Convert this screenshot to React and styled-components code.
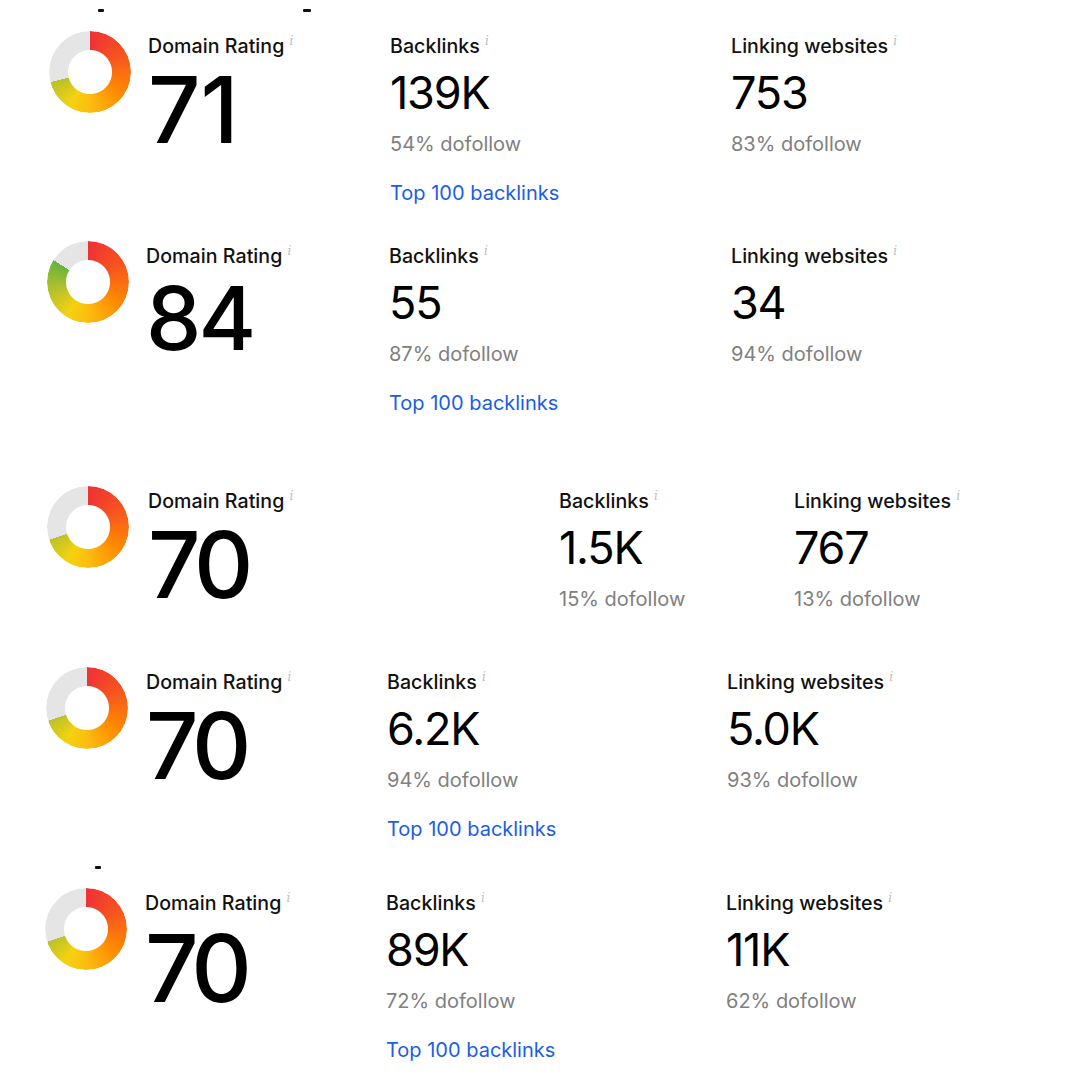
import React from "react";
import styled, { createGlobalStyle, css } from "styled-components";

const GlobalStyle = createGlobalStyle`
  html, body {
    margin: 0;
    padding: 0;
    background: #fff;
  }
  body {
    font-family: Inter, "Noto Sans", "Liberation Sans", sans-serif;
    color: #0a0a0a;
    -webkit-font-smoothing: antialiased;
  }
`;

const Page = styled.main`
  width: 1080px;
  min-height: 1080px;
  padding-top: 9px;
  box-sizing: border-box;
  display: flex;
  flex-direction: column;
`;

// bits of cut-off text left over at the edges of the crops
const TraceRow = styled.div`
  height: ${(p) => p.$height}px;
  margin-bottom: ${(p) => p.$after}px;
  display: flex;
`;

const Trace = styled.span`
  display: block;
  margin-left: ${(p) => p.$x}px;
  width: ${(p) => p.$w}px;
  height: 3px;
  background: #111;
  border-radius: 1px;
`;

const Block = styled.section`
  height: ${(p) => p.$height}px;
  padding-left: ${(p) => p.$left}px;
  display: grid;
  grid-template-columns: ${(p) => p.$cols};
  align-items: start;
  box-sizing: border-box;
`;

const GAUGE_COLORS = `
  #ef3137 0deg,
  #f6541f 60deg,
  #ff8a00 125deg,
  #fbbd10 180deg,
  #f4d20f 212deg,
  #bcc22a 252deg,
  #6cb43c 300deg,
  #3aa94a 360deg
`;

const Donut = styled.div`
  width: 82px;
  height: 82px;
  border-radius: 50%;
  ${(p) => css`
    background: conic-gradient(
        transparent 0deg ${p.$value * 3.6}deg,
        #e5e5e5 ${p.$value * 3.6}deg 360deg
      ),
      conic-gradient(${GAUGE_COLORS});
  `}
  -webkit-mask: radial-gradient(circle, transparent 21.5px, #000 22.5px);
  mask: radial-gradient(circle, transparent 21.5px, #000 22.5px);
`;

const Metric = styled.div`
  padding-top: 3px;
  display: flex;
  flex-direction: column;
`;

const Label = styled.div`
  font-size: 19.6px;
  line-height: 24px;
  font-weight: 500;
  letter-spacing: 0.05px;
  white-space: nowrap;
  color: #111;
`;

const Info = styled.sup`
  font-family: "DejaVu Serif", serif;
  font-style: italic;
  font-size: 12px;
  line-height: 0;
  color: #bdbdbd;
  margin-left: 5px;
  vertical-align: 8px;
`;

const Rating = styled.div`
  font-size: ${(p) => p.$size}px;
  line-height: 1;
  font-weight: 500;
  letter-spacing: ${(p) => p.$track}px;
  margin-top: 6px;
  color: #000;
`;

const Value = styled.div`
  font-size: 45px;
  line-height: 48px;
  font-weight: 400;
  letter-spacing: -1.2px;
  margin-top: 11px;
  color: #000;
`;

const Sub = styled.div`
  font-size: 20px;
  line-height: 24px;
  color: #808080;
  margin-top: 15px;
`;

const TopLink = styled.a`
  font-size: 20px;
  line-height: 24px;
  color: #1b5de6;
  text-decoration: none;
  margin-top: 25px;
  cursor: pointer;
`;

const rows = [
  {
    height: 210,
    left: 49,
    cols: "99px 242px 341px 1fr",
    dr: 71,
    drSize: 92,
    track: 0,
    backlinks: "139K",
    blFollow: "54%",
    sites: "753",
    siteFollow: "83%",
    top: true,
  },
  {
    height: 245,
    left: 47,
    cols: "99px 243px 342px 1fr",
    dr: 84,
    drSize: 88,
    track: -3,
    backlinks: "55",
    blFollow: "87%",
    sites: "34",
    siteFollow: "94%",
    top: true,
  },
  {
    height: 181,
    left: 47,
    cols: "101px 411px 235px 1fr",
    dr: 70,
    drSize: 92,
    track: -5,
    backlinks: "1.5K",
    blFollow: "15%",
    sites: "767",
    siteFollow: "13%",
    top: false,
  },
  {
    height: 199,
    left: 46,
    cols: "100px 241px 340px 1fr",
    dr: 70,
    drSize: 92,
    track: -5,
    backlinks: "6.2K",
    blFollow: "94%",
    sites: "5.0K",
    siteFollow: "93%",
    top: true,
  },
  {
    height: 190,
    left: 45,
    cols: "100px 241px 340px 1fr",
    dr: 70,
    drSize: 94,
    track: -6,
    backlinks: "89K",
    blFollow: "72%",
    sites: "11K",
    siteFollow: "62%",
    top: true,
  },
];

const OverviewRow = ({ row }) => (
  <Block $height={row.height} $left={row.left} $cols={row.cols}>
    <Donut $value={row.dr} />
    <Metric>
      <Label>
        Domain Rating<Info>i</Info>
      </Label>
      <Rating $size={row.drSize} $track={row.track}>
        {row.dr}
      </Rating>
    </Metric>
    <Metric>
      <Label>
        Backlinks<Info>i</Info>
      </Label>
      <Value>{row.backlinks}</Value>
      <Sub>{row.blFollow} dofollow</Sub>
      {row.top && <TopLink>Top 100 backlinks</TopLink>}
    </Metric>
    <Metric>
      <Label>
        Linking websites<Info>i</Info>
      </Label>
      <Value>{row.sites}</Value>
      <Sub>{row.siteFollow} dofollow</Sub>
    </Metric>
  </Block>
);

export default function App() {
  return (
    <>
      <GlobalStyle />
      <Page>
        <TraceRow $height={3} $after={19}>
          <Trace $x={98} $w={6} />
          <Trace $x={199} $w={8} />
        </TraceRow>
        {rows.slice(0, 4).map((row, i) => (
          <OverviewRow key={i} row={row} />
        ))}
        <TraceRow $height={3} $after={19}>
          <Trace $x={95} $w={6} />
        </TraceRow>
        <OverviewRow row={rows[4]} />
      </Page>
    </>
  );
}
